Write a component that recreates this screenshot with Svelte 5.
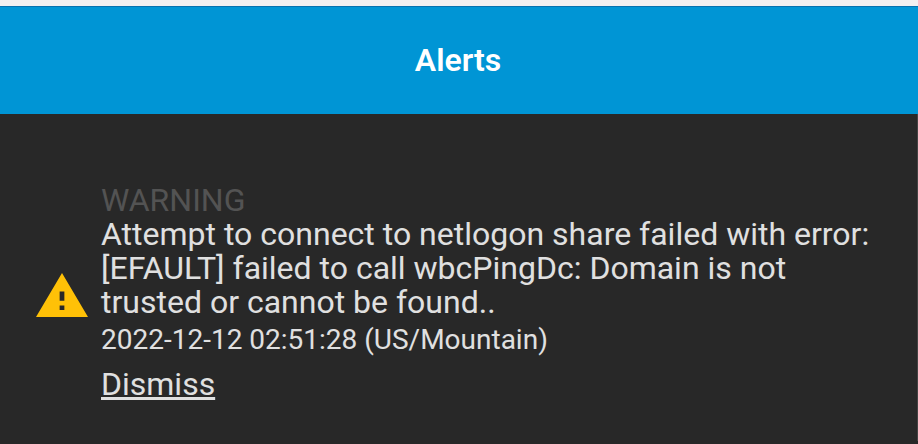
<script>
  const alerts = [
    {
      level: 'WARNING',
      message:
        'Attempt to connect to netlogon share failed with error: [EFAULT] failed to call wbcPingDc: Domain is not trusted or cannot be found..',
      time: '2022-12-12 02:51:28 (US/Mountain)'
    }
  ];
</script>

<section class="panel">
  <header><h1>Alerts</h1></header>
  <ul>
    {#each alerts as alert}
      <li>
        <svg class="icon" viewBox="0 0 22 19" preserveAspectRatio="none" aria-hidden="true">
          <path fill="#ffc107" d="M0 19h22L11 0 0 19zm12-3h-2v-2h2v2zm0-4h-2V8h2v4z" />
        </svg>
        <div class="body">
          <h2>{alert.level}</h2>
          <p>{alert.message}</p>
          <p class="time">{alert.time}</p>
          <button type="button">Dismiss</button>
        </div>
      </li>
    {/each}
  </ul>
</section>

<style>
  :global(body) {
    background: #282828;
  }
  .panel {
    border-top: 6px solid #f2f0f1;
    font-family: Roboto, sans-serif;
    color: #e0e0e0;
  }
  header {
    box-sizing: border-box;
    height: 108px;
    padding: 33px 18px 0 16px;
    border-top: 1px solid #0672b0;
    background: #0095d5;
    color: #fff;
    text-align: center;
  }
  h1 {
    margin: 0;
    font-size: 32px;
    font-weight: 600;
    line-height: 40px;
  }
  ul {
    margin: 0;
    padding: 0;
    list-style: none;
  }
  li {
    display: flex;
    align-items: center;
    gap: 13px;
    padding: 69px 36px 37px;
    border-right: 1px solid #444;
  }
  .icon {
    flex: none;
    width: 52px;
    height: 44px;
    margin-top: 2px;
  }
  h2,
  p {
    margin: 0;
    font-size: 32px;
    font-weight: 400;
    line-height: 34px;
  }
  h2 {
    color: #535353;
  }
  .time {
    font-size: 28px;
    line-height: 42px;
  }
  button {
    display: block;
    margin-top: 3px;
    padding: 0;
    border: 0;
    background: none;
    color: inherit;
    font: inherit;
    font-size: 32px;
    line-height: 40px;
    text-decoration: underline;
    cursor: pointer;
  }
</style>
